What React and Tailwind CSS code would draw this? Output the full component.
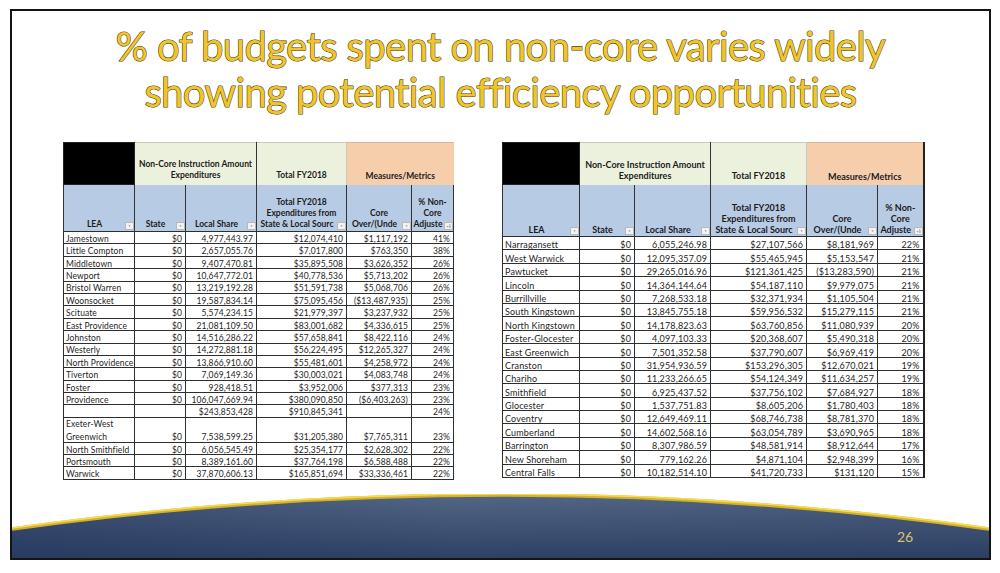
import React from 'react';

const leftRows = [
  ['Jamestown', '$0', '4,977,443.97', '$12,074,410', '$1,117,192', '41%'],
  ['Little Compton', '$0', '2,657,055.76', '$7,017,800', '$763,350', '38%'],
  ['Middletown', '$0', '9,407,470.81', '$35,895,508', '$3,626,352', '26%'],
  ['Newport', '$0', '10,647,772.01', '$40,778,536', '$5,713,202', '26%'],
  ['Bristol Warren', '$0', '13,219,192.28', '$51,591,738', '$5,068,706', '26%'],
  ['Woonsocket', '$0', '19,587,834.14', '$75,095,456', '($13,487,935)', '25%'],
  ['Scituate', '$0', '5,574,234.15', '$21,979,397', '$3,237,932', '25%'],
  ['East Providence', '$0', '21,081,109.50', '$83,001,682', '$4,336,615', '25%'],
  ['Johnston', '$0', '14,516,286.22', '$57,658,841', '$8,422,116', '24%'],
  ['Westerly', '$0', '14,272,881.18', '$56,224,495', '$12,265,327', '24%'],
  ['North Providence', '$0', '13,866,910.60', '$55,481,601', '$4,258,972', '24%'],
  ['Tiverton', '$0', '7,069,149.36', '$30,003,021', '$4,083,748', '24%'],
  ['Foster', '$0', '928,418.51', '$3,952,006', '$377,313', '23%'],
  ['Providence', '$0', '106,047,669.94', '$380,090,850', '($6,403,263)', '23%'],
  ['', '', '$243,853,428', '$910,845,341', '', '24%'],
  [['Exeter-West', 'Greenwich'], '$0', '7,538,599.25', '$31,205,380', '$7,765,311', '23%'],
  ['North Smithfield', '$0', '6,056,545.49', '$25,354,177', '$2,628,302', '22%'],
  ['Portsmouth', '$0', '8,389,161.60', '$37,764,198', '$6,588,488', '22%'],
  ['Warwick', '$0', '37,870,606.13', '$165,851,694', '$33,336,461', '22%'],
];

const rightRows = [
  ['Narragansett', '$0', '6,055,246.98', '$27,107,566', '$8,181,969', '22%'],
  ['West Warwick', '$0', '12,095,357.09', '$55,465,945', '$5,153,547', '21%'],
  ['Pawtucket', '$0', '29,265,016.96', '$121,361,425', '($13,283,590)', '21%'],
  ['Lincoln', '$0', '14,364,144.64', '$54,187,110', '$9,979,075', '21%'],
  ['Burrillville', '$0', '7,268,533.18', '$32,371,934', '$1,105,504', '21%'],
  ['South Kingstown', '$0', '13,845,755.18', '$59,956,532', '$15,279,115', '21%'],
  ['North Kingstown', '$0', '14,178,823.63', '$63,760,856', '$11,080,939', '20%'],
  ['Foster-Glocester', '$0', '4,097,103.33', '$20,368,607', '$5,490,318', '20%'],
  ['East Greenwich', '$0', '7,501,352.58', '$37,790,607', '$6,969,419', '20%'],
  ['Cranston', '$0', '31,954,936.59', '$153,296,305', '$12,670,021', '19%'],
  ['Chariho', '$0', '11,233,266.65', '$54,124,349', '$11,634,257', '19%'],
  ['Smithfield', '$0', '6,925,437.52', '$37,756,102', '$7,684,927', '18%'],
  ['Glocester', '$0', '1,537,751.83', '$8,605,206', '$1,780,403', '18%'],
  ['Coventry', '$0', '12,649,469.11', '$68,746,738', '$8,781,370', '18%'],
  ['Cumberland', '$0', '14,602,568.16', '$63,054,789', '$3,690,965', '18%'],
  ['Barrington', '$0', '8,307,986.59', '$48,581,914', '$8,912,644', '17%'],
  ['New Shoreham', '$0', '779,162.26', '$4,871,104', '$2,948,399', '16%'],
  ['Central Falls', '$0', '10,182,514.10', '$41,720,733', '$131,120', '15%'],
];

const heads = [
  ['LEA'],
  ['State'],
  ['Local Share'],
  ['Total FY2018', 'Expenditures from', 'State & Local Sourc'],
  ['Core', 'Over/(Unde'],
  ['% Non-', 'Core', 'Adjuste'],
];

// little excel filter button
const Filter = ({ sort }) => (
  <span className="inline-flex h-[8px] w-[9px] shrink-0 items-center justify-center border border-[#b9b9b9] bg-[#f2f2f2]">
    <svg viewBox="0 0 9 8" className="h-[8px] w-[9px]">
      {sort ? (
        <>
          <path d="M2 4.2h2.6L3.3 5.8z" fill="#7a7a7a" />
          <path d="M6.3 1.5v4.5M5.2 4.8l1.1 1.2 1.1-1.2" stroke="#7a7a7a" strokeWidth="0.8" fill="none" />
        </>
      ) : (
        <path d="M3.2 3.3h2.8L4.6 5z" fill="#7a7a7a" />
      )}
    </svg>
  </span>
);

const DataTable = ({ widths, head2H, rowH, rows, text, headText, wrap = '' }) => (
  <table className={`table-fixed border-collapse ${wrap}`} style={{ width: widths.reduce((a, b) => a + b, 0) }}>
    <colgroup>
      {widths.map((w, i) => (
        <col key={i} style={{ width: w }} />
      ))}
    </colgroup>
    <thead className={`font-bold text-[#1c1c1c] ${headText}`}>
      <tr className="h-[42px]">
        <th className="border border-[#222] bg-black p-0" />
        <th colSpan={2} className="border-t border-l border-r border-[#c9ccb8] border-r-[#333] bg-[#ecf1dd] p-0 pb-[4px] align-bottom font-bold leading-[11px]">
          <div>Non-Core Instruction Amount</div>
          <div>Expenditures</div>
        </th>
        <th className="border-t border-r border-[#c9ccb8] bg-[#ecf1dd] p-0 pb-[4px] align-bottom font-bold leading-[11px]">
          Total FY2018
        </th>
        <th colSpan={2} className="border-t border-[#d9b99c] bg-[#f7ceac] p-0 pb-[3px] align-bottom font-bold leading-[11px]">
          Measures/Metrics
        </th>
      </tr>
      <tr style={{ height: head2H }}>
        {heads.map((lines, i) => (
          <th key={i} className="border-x border-[#333] bg-[#b8cbe4] p-0 pb-[1px] align-bottom font-bold leading-[11px]">
            {lines.slice(0, -1).map((l) => (
              <div key={l} className="text-center">{l}</div>
            ))}
            <div className="flex items-end">
              <span className="flex-1 overflow-hidden whitespace-nowrap text-center">{lines[lines.length - 1]}</span>
              <Filter sort={i === 5} />
            </div>
          </th>
        ))}
      </tr>
    </thead>
    <tbody className={`text-[#1e1e1e] ${text}`}>
      {rows.map((r, ri) => {
        const tall = Array.isArray(r[0]);
        return (
          <tr key={ri} style={{ height: tall ? rowH * 2 : rowH }}>
            {r.map((c, ci) => (
              <td
                key={ci}
                className={`overflow-hidden whitespace-nowrap border border-[#2e2e2e] p-0 align-bottom leading-none ${
                  ci === 0 ? 'pl-[2px] text-left' : 'pr-[3px] text-right'
                }`}
              >
                {tall && ci === 0 ? (
                  <div className="flex flex-col gap-[5px]">
                    <span>{c[0]}</span>
                    <span>{c[1]}</span>
                  </div>
                ) : (
                  c
                )}
              </td>
            ))}
          </tr>
        );
      })}
    </tbody>
  </table>
);

export default function App() {
  return (
    <div className="h-[573px] w-[1000px] bg-white pl-[10px] pt-[9px]" style={{ fontFamily: 'Lato, "Open Sans", sans-serif' }}>
      <div className="flex h-[551px] w-[981px] flex-col overflow-hidden border-2 border-[#141414] bg-white">
        {/* Title */}
        <div className="h-[131px] pt-[12px] text-center text-[40px] leading-[46px] tracking-[-0.6px] text-[#efc52b] [-webkit-text-stroke:1.1px_#4a3c0a] [paint-order:stroke_fill]">
          <div>% of budgets spent on non-core varies widely</div>
          <div>showing potential efficiency opportunities</div>
        </div>

        {/* Tables */}
        <div className="flex items-start gap-[48px] pl-[51px]">
          <DataTable
            widths={[71, 51, 71, 90, 65, 42]}
            head2H={47}
            rowH={12.4}
            rows={leftRows}
            text="text-[8.5px] tracking-[0.1px]"
            headText="text-[8.5px]"
          />
          <DataTable
            widths={[77, 55, 76, 96, 71, 46]}
            head2H={52}
            rowH={13.4}
            rows={rightRows}
            text="text-[9px] tracking-[0.15px]"
            headText="text-[9px]"
            wrap="border-r-2 border-r-[#222]"
          />
        </div>

        {/* Footer arc */}
        <div className="relative mt-auto h-[64px]">
          <svg viewBox="0 0 977 64" preserveAspectRatio="none" className="h-full w-full">
            <defs>
              <linearGradient id="navy" x1="0" y1="0" x2="0" y2="1">
                <stop offset="0" stopColor="#526584" />
                <stop offset="1" stopColor="#2e4165" />
              </linearGradient>
              <linearGradient id="side" x1="0" y1="0" x2="1" y2="0">
                <stop offset="0" stopColor="#1f3157" stopOpacity="0.4" />
                <stop offset="0.45" stopColor="#1f3157" stopOpacity="0" />
                <stop offset="1" stopColor="#1f3157" stopOpacity="0.12" />
              </linearGradient>
            </defs>
            <path d="M0 36 Q488.5 -32 977 36 L977 64 L0 64 Z" fill="url(#navy)" />
            <path d="M0 36 Q488.5 -32 977 36 L977 64 L0 64 Z" fill="url(#side)" />
            <path d="M0 35 Q488.5 -33 977 35" stroke="#d6b126" strokeWidth="3.5" fill="none" />
            <path d="M0 34 Q488.5 -34 977 34" stroke="#f4dc5a" strokeWidth="1.6" fill="none" />
          </svg>
          <span className="absolute left-[885px] top-[36px] text-[14px] leading-none text-[#d9c271]">26</span>
        </div>
      </div>
    </div>
  );
}
